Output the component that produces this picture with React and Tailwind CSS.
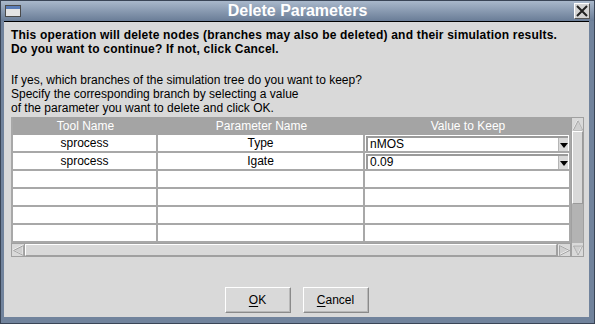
import React from 'react'

const rows = [
  { tool: 'sprocess', param: 'Type', value: 'nMOS' },
  { tool: 'sprocess', param: 'Igate', value: '0.09' },
  null,
  null,
  null,
  null,
]

function Arrow({ dir }) {
  const pts = {
    up: '6,1 11,11 1,11',
    down: '1,1 11,1 6,11',
    left: '1,6 11,1 11,11',
    right: '1,1 11,6 1,11',
  }[dir]
  return (
    <svg width="12" height="12" viewBox="0 0 12 12" className="block">
      <polygon points={pts} fill="#cfcfcf" stroke="#f4f4f4" strokeWidth="1" />
      <polygon points={pts} fill="none" stroke="#8c8c8c" strokeWidth="1" transform="translate(0.5 0.5)" opacity="0.7" />
    </svg>
  )
}

function Combo({ value }) {
  return (
    <div className="mx-[1px] my-[1px] flex h-[15px] border-t-2 border-l-2 border-[#9a9a9a] bg-white">
      <div className="flex-1 pl-[2px] text-[12px] leading-[13px] text-black">{value}</div>
      <div className="flex w-[10px] items-center justify-center border-l border-[#b5b5b5] bg-[#d9d9d9]">
        <svg width="8" height="6" viewBox="0 0 8 6" className="block">
          <polygon points="0,1 8,1 4,6" fill="#000" />
        </svg>
      </div>
    </div>
  )
}

function Button({ mnemonic, rest }) {
  return (
    <button
      type="button"
      className="h-[26px] w-[66px] border border-t-white border-l-white border-r-[#8a8a8a] border-b-[#8a8a8a] bg-[#d9d9d9] text-[12px] text-black shadow-[inset_-1px_-1px_0_#b8b8b8]"
    >
      <span className="underline underline-offset-2">{mnemonic}</span>
      {rest}
    </button>
  )
}

export default function App() {
  return (
    <div className="flex h-[324px] w-[595px] flex-col overflow-hidden border border-[#3a4556] bg-[#71839c] font-['Liberation_Sans',Arial,sans-serif]">
      <div className="relative flex h-[20px] items-center justify-center bg-gradient-to-b from-[#a9b8cb] to-[#6a7d97]">
        <div className="absolute left-[4px] top-[4px] h-[12px] w-[16px] border border-[#4a4a4a] bg-[#e4e4e4]">
          <div className="h-[3px] bg-[#5a7db8]" />
        </div>
        <span className="text-[16px] font-bold leading-none text-white">Delete Parameters</span>
        <div className="absolute right-[4px] top-[2px] flex h-[16px] w-[16px] items-center justify-center border border-t-white border-l-white border-r-[#555] border-b-[#555] bg-[#d4d4d4]">
          <svg width="12" height="12" viewBox="0 0 12 12" className="block">
            <path d="M1 1 L11 11 M11 1 L1 11" stroke="#222" strokeWidth="2" />
          </svg>
        </div>
      </div>

      <div className="flex flex-1 flex-col pl-[3px] pr-[5px] pb-[6px]">
        <div className="flex flex-1 flex-col border-t border-black bg-[#d9d9d9] pl-[7px] pr-[5px] pt-[6px] text-black">
          <div className="text-[12px] font-bold leading-[14px] tracking-[0.2px]">
            <p>This operation will delete nodes (branches may also be deleted) and their simulation results.</p>
            <p>Do you want to continue? If not, click Cancel.</p>
          </div>
          <div className="mt-[17px] text-[12px] leading-[14px]">
            <p>If yes, which branches of the simulation tree do you want to keep?</p>
            <p>Specify the corresponding branch by selecting a value</p>
            <p>of the parameter you want to delete and click OK.</p>
          </div>

          <div className="mt-[2px] flex h-[140px]">
            <div className="flex w-[560px] flex-col">
              <div className="h-[126px] border-l-2 border-[#a8a8a8] bg-white">
                <div className="grid h-[18px] grid-cols-[145px_207px_206px] items-center bg-[#a4a4a4] text-center text-[12px] text-white">
                  <div>Tool Name</div>
                  <div>Parameter Name</div>
                  <div>Value to Keep</div>
                </div>
                {rows.map((r, i) => (
                  <div key={i} className="grid h-[18px] grid-cols-[145px_207px_206px] border-b-2 border-[#a8a8a8] text-[12px]">
                    <div className="border-r-2 border-[#a8a8a8] text-center leading-[16px]">{r ? r.tool : ''}</div>
                    <div className="border-r-2 border-[#a8a8a8] text-center leading-[16px]">{r ? r.param : ''}</div>
                    <div className="border-r-2 border-[#a8a8a8]">{r ? <Combo value={r.value} /> : null}</div>
                  </div>
                ))}
              </div>
              <div className="flex h-[14px] border border-[#a0a0a0] bg-[#d9d9d9]">
                <div className="flex w-[13px] items-center justify-center border-r border-[#a0a0a0]">
                  <Arrow dir="left" />
                </div>
                <div className="flex-1 border border-t-white border-l-white border-r-[#a0a0a0] border-b-[#a0a0a0]" />
                <div className="flex w-[13px] items-center justify-center border-l border-[#a0a0a0]">
                  <Arrow dir="right" />
                </div>
              </div>
            </div>
            <div className="flex w-[13px] flex-col border border-[#a0a0a0] bg-[#b3b3b3]">
              <div className="flex h-[13px] items-center justify-center bg-[#d9d9d9]">
                <Arrow dir="up" />
              </div>
              <div className="h-[73px] border border-t-white border-l-white border-r-[#9a9a9a] border-b-[#9a9a9a] bg-[#d9d9d9]" />
              <div className="flex-1" />
              <div className="flex h-[13px] items-center justify-center bg-[#d9d9d9]">
                <Arrow dir="down" />
              </div>
            </div>
          </div>

          <div className="mt-[30px] flex justify-center gap-[12px] pr-[2px]">
            <Button mnemonic="O" rest="K" />
            <Button mnemonic="C" rest="ancel" />
          </div>
        </div>
      </div>
    </div>
  )
}
